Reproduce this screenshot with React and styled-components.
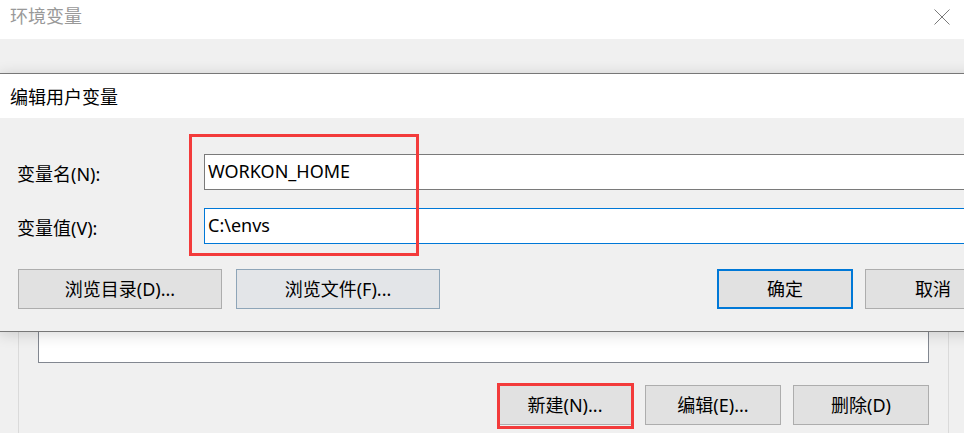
import styled, { createGlobalStyle, css } from "styled-components";

const GlobalStyle = createGlobalStyle`
	html, body {
		margin: 0;
		padding: 0;
		background: #f0f0f0;
	}
	body {
		font-family: "Noto Sans", "Noto Sans CJK SC", sans-serif;
		font-size: 18px;
		color: #000;
	}
`;

const Desktop = styled.div`
	position: relative;
	width: 964px;
	height: 433px;
	overflow: hidden;
	background: #f0f0f0;
`;

const Window = styled.div`
	display: flex;
	flex-direction: column;
	height: 100%;
`;

const TitleBar = styled.div`
	height: 39px;
	flex-shrink: 0;
	display: flex;
	align-items: flex-start;
	justify-content: space-between;
	background: #fff;
	padding: 0 14px 0 10px;
	box-sizing: border-box;
`;

const WinTitle = styled.span`
	color: #999;
	font-size: 18px;
	line-height: 33px;
`;

const CloseIcon = styled.svg`
	width: 16px;
	height: 16px;
	margin-top: 9px;
`;

const WindowBody = styled.div`
	flex: 1;
	padding: 0 15px 0 18px;
`;

const GroupBox = styled.div`
	margin-top: 60px;
	height: 400px;
	border: 1px solid #dadada;
	border-bottom: none;
	padding: 20px 19px 0 19px;
`;

const ListBox = styled.div`
	height: 243px;
	box-sizing: border-box;
	background: #fff;
	border: 1px solid #828790;
`;

const ButtonRow = styled.div`
	display: flex;
	justify-content: ${(p) => (p.$end ? "flex-end" : "flex-start")};
	gap: ${(p) => p.$gap || 12}px;
	margin-top: ${(p) => p.$top || 0}px;
	padding: ${(p) => p.$pad || "0"};
`;

const Button = styled.button`
	position: relative;
	width: ${(p) => p.$w || 136}px;
	height: 40px;
	box-sizing: border-box;
	margin: 0;
	padding: 0;
	background: ${(p) => (p.$hover ? "#e3e5e8" : "#e1e1e1")};
	border: ${(p) =>
		p.$default
			? "2px solid #0078d7"
			: p.$hover
			? "1px solid #8ea5b8"
			: "1px solid #adadad"};
	font-family: inherit;
	font-size: 18px;
	color: #000;
	line-height: 1;
	margin-left: ${(p) => (p.$push ? "auto" : "0")};

	${(p) =>
		p.$marked &&
		css`
			&::after {
				content: "";
				position: absolute;
				top: -3px;
				left: -1px;
				width: 137px;
				height: 46px;
				box-sizing: border-box;
				border: 3px solid #f33b3b;
			}
		`}
`;

const Dialog = styled.div`
	position: absolute;
	top: 73px;
	left: -1px;
	width: 1019px;
	border: 1px solid #777;
	background: #f0f0f0;
	box-shadow: 0 2px 14px rgba(0, 0, 0, 0.16);
`;

const DialogTitle = styled.div`
	height: 44px;
	display: flex;
	align-items: center;
	padding-left: 10px;
	background: #fff;
	font-size: 18px;
`;

const DialogBody = styled.div`
	position: relative;
	height: 213px;
	box-sizing: border-box;
	padding-top: 36px;
`;

const FieldGrid = styled.div`
	display: grid;
	grid-template-columns: 187px 1fr;
	row-gap: 18px;
	padding: 0 18px 0 17px;
`;

const Label = styled.label`
	align-self: center;
	font-size: 18px;
	padding-top: 2px;
`;

const Field = styled.input`
	height: 36px;
	box-sizing: border-box;
	margin: 0;
	padding: 0 0 3px 3px;
	border: 1px solid ${(p) => (p.$focused ? "#0078d7" : "#7a7a7a")};
	outline: none;
	background: #fff;
	font-family: inherit;
	font-size: 18px;
	color: #000;
`;

const Highlight = styled.div`
	position: absolute;
	top: 16px;
	left: 189px;
	width: 230px;
	height: 122px;
	box-sizing: border-box;
	border: 3px solid #f33b3b;
	pointer-events: none;
`;

export default function App() {
	return (
		<>
			<GlobalStyle />
			<Desktop>
				<Window>
					<TitleBar>
						<WinTitle>环境变量</WinTitle>
						<CloseIcon viewBox="0 0 16 16">
							<path d="M0.5 0.5 L15.5 15.5 M15.5 0.5 L0.5 15.5" stroke="#7a7a7a" strokeWidth="1" fill="none" />
						</CloseIcon>
					</TitleBar>
					<WindowBody>
						<GroupBox>
							<ListBox />
							<ButtonRow $end $top={22}>
								<Button $marked>新建(N)...</Button>
								<Button>编辑(E)...</Button>
								<Button>删除(D)</Button>
							</ButtonRow>
						</GroupBox>
					</WindowBody>
				</Window>

				<Dialog>
					<DialogTitle>编辑用户变量</DialogTitle>
					<DialogBody>
						<FieldGrid>
							<Label>变量名(N):</Label>
							<Field defaultValue="WORKON_HOME" readOnly />
							<Label>变量值(V):</Label>
							<Field $focused defaultValue="C:\envs" readOnly />
						</FieldGrid>
						<Highlight />
						<ButtonRow $top={25} $gap={14} $pad="0 18px 0 18px">
							<Button $w={204}>浏览目录(D)...</Button>
							<Button $w={204} $hover>浏览文件(F)...</Button>
							<Button $push $default>确定</Button>
							<Button style={{ marginLeft: -2 }}>取消</Button>
						</ButtonRow>
					</DialogBody>
				</Dialog>
			</Desktop>
		</>
	);
}
